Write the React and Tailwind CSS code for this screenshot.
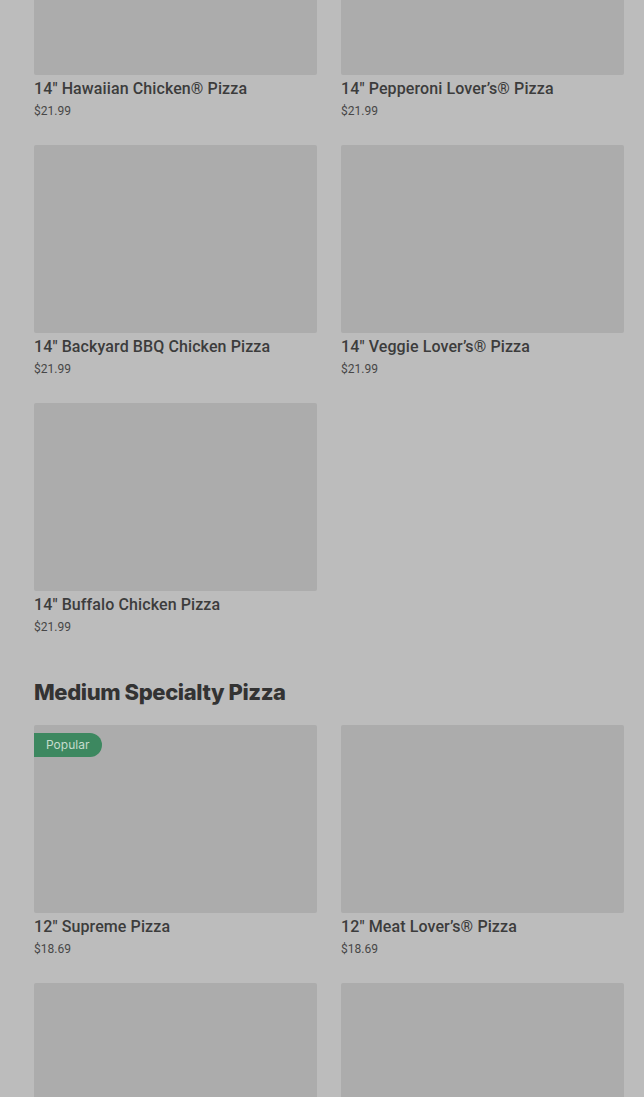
import React from "react";

const Card = ({ title, price, popular }) => (
  <div className="flex flex-col">
    <div className="relative h-[188px] bg-[#acacac] rounded-[2px]">
      {popular && (
        <div className="absolute left-0 top-[8px] h-[24px] w-[68px] bg-[#3d8860] rounded-r-full flex items-center pl-[12px] text-[12px] text-[#c5dccd]" style={{ fontFamily: "Inter, sans-serif" }}>
          Popular
        </div>
      )}
    </div>
    <div className="h-[70px] pt-[3px]">
      <div className="text-[16px] leading-[22px] font-medium text-[#3c3c3c] tracking-[0.1px]" style={{ fontFamily: "Roboto, sans-serif" }}>{title}</div>
      <div className="text-[12px] leading-[18px] mt-[2px] text-[#474747]" style={{ fontFamily: "Roboto, sans-serif" }}>{price}</div>
    </div>
  </div>
);

export default function App() {
  return (
    <div className="w-[644px] h-[1097px] overflow-hidden bg-[#bcbcbc]">
      <div className="px-[34px] pr-[20px] -mt-[113px]">
        <div className="grid grid-cols-2 gap-x-[24px]">
          <Card title={'14" Hawaiian Chicken® Pizza'} price="$21.99" />
          <Card title={'14" Pepperoni Lover\u2019s® Pizza'} price="$21.99" />
          <Card title={'14" Backyard BBQ Chicken Pizza'} price="$21.99" />
          <Card title={'14" Veggie Lover\u2019s® Pizza'} price="$21.99" />
          <Card title={'14" Buffalo Chicken Pizza'} price="$21.99" />
        </div>
        <h2 className="mt-[16px] h-[48px] text-[22px] leading-[30px] font-extrabold text-[#333] tracking-[-0.4px]" style={{ fontFamily: "Inter, sans-serif" }}>
          Medium Specialty Pizza
        </h2>
        <div className="grid grid-cols-2 gap-x-[24px]">
          <Card title={'12" Supreme Pizza'} price="$18.69" popular />
          <Card title={'12" Meat Lover\u2019s® Pizza'} price="$18.69" />
          <Card title="" price="" />
          <Card title="" price="" />
        </div>
      </div>
    </div>
  );
}
